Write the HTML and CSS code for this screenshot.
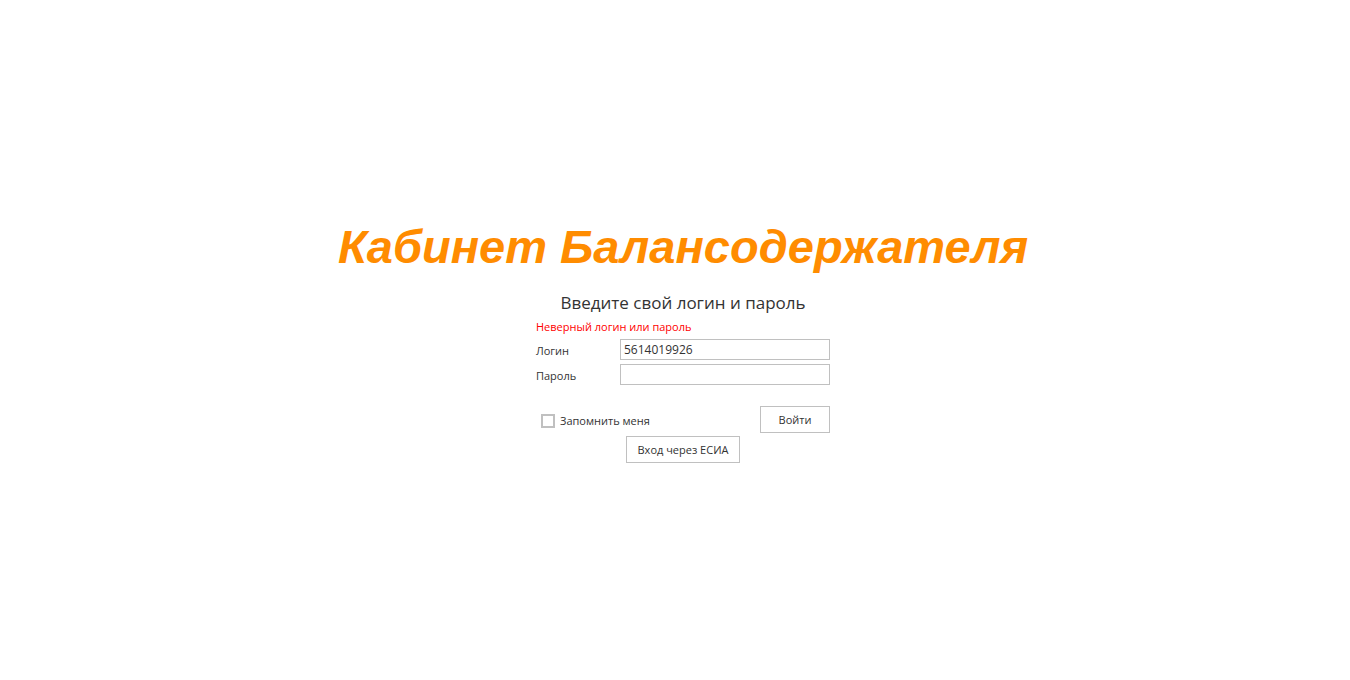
FILE: index.html
```html
<!DOCTYPE html>
<html lang="ru">
<head>
<meta charset="utf-8">
<title>Кабинет Балансодержателя</title>
<link rel="stylesheet" href="styles.css">
</head>
<body>
<main class="page">
  <h1 class="title">Кабинет Балансодержателя</h1>
  <form class="login">
    <h2 class="prompt">Введите свой логин и пароль</h2>
    <p class="error" role="alert">Неверный логин или пароль</p>
    <div class="fields">
      <label class="label" for="login">Логин</label>
      <input class="field" id="login" type="text" value="5614019926">
      <label class="label" for="password">Пароль</label>
      <input class="field" id="password" type="password">
    </div>
    <div class="actions">
      <label class="remember"><input class="check" type="checkbox">Запомнить меня</label>
      <button class="button" type="submit">Войти</button>
    </div>
    <button class="button esia" type="button">Вход через ЕСИА</button>
  </form>
</main>
</body>
</html>
```
FILE: styles.css
```css
* { box-sizing: border-box; }
body {
  margin: 0;
  background: #fff;
  color: #333;
  font: 11px/16px "Segoe UI", "Open Sans", "Noto Sans", sans-serif;
}
.page {
  min-height: 100vh;
  padding: 2px 0 0 16px;
  display: flex;
  flex-direction: column;
  align-items: center;
  justify-content: center;
}
.title {
  margin: 0 0 17px;
  color: #ff8c00;
  font: italic bold 47px/55px Arial, "Liberation Sans", sans-serif;
}
.login {
  width: 294px;
  display: flex;
  flex-direction: column;
}
.prompt {
  margin: 0 0 4px;
  font-size: 17px;
  font-weight: 400;
  line-height: 24px;
  text-align: center;
  white-space: nowrap;
}
.error { margin: 0 0 4px; color: #f00; }
.fields {
  display: grid;
  grid-template-columns: 84px 1fr;
  row-gap: 4px;
  align-items: center;
}
.label { padding-top: 3px; }
.field {
  width: 100%;
  height: 21px;
  padding: 0 3px;
  border: 1px solid #c0c0c0;
  border-radius: 0;
  background: #fff;
  color: inherit;
  font: inherit;
  font-size: 12px;
}
.actions {
  display: flex;
  align-items: center;
  justify-content: space-between;
  margin: 21px 0 3px;
}
.remember {
  display: flex;
  align-items: center;
  gap: 5px;
  padding: 2px 0 0 5px;
}
.check {
  appearance: none;
  width: 14px;
  height: 14px;
  margin: 0;
  border: 2px solid #c0c0c0;
  background: #fff;
}
.check:checked { background: #c0c0c0; }
.button {
  min-width: 70px;
  height: 27px;
  padding: 0 11px;
  border: 1px solid #c0c0c0;
  background: #fff;
  color: inherit;
  font: inherit;
}
.esia { align-self: center; }
```
